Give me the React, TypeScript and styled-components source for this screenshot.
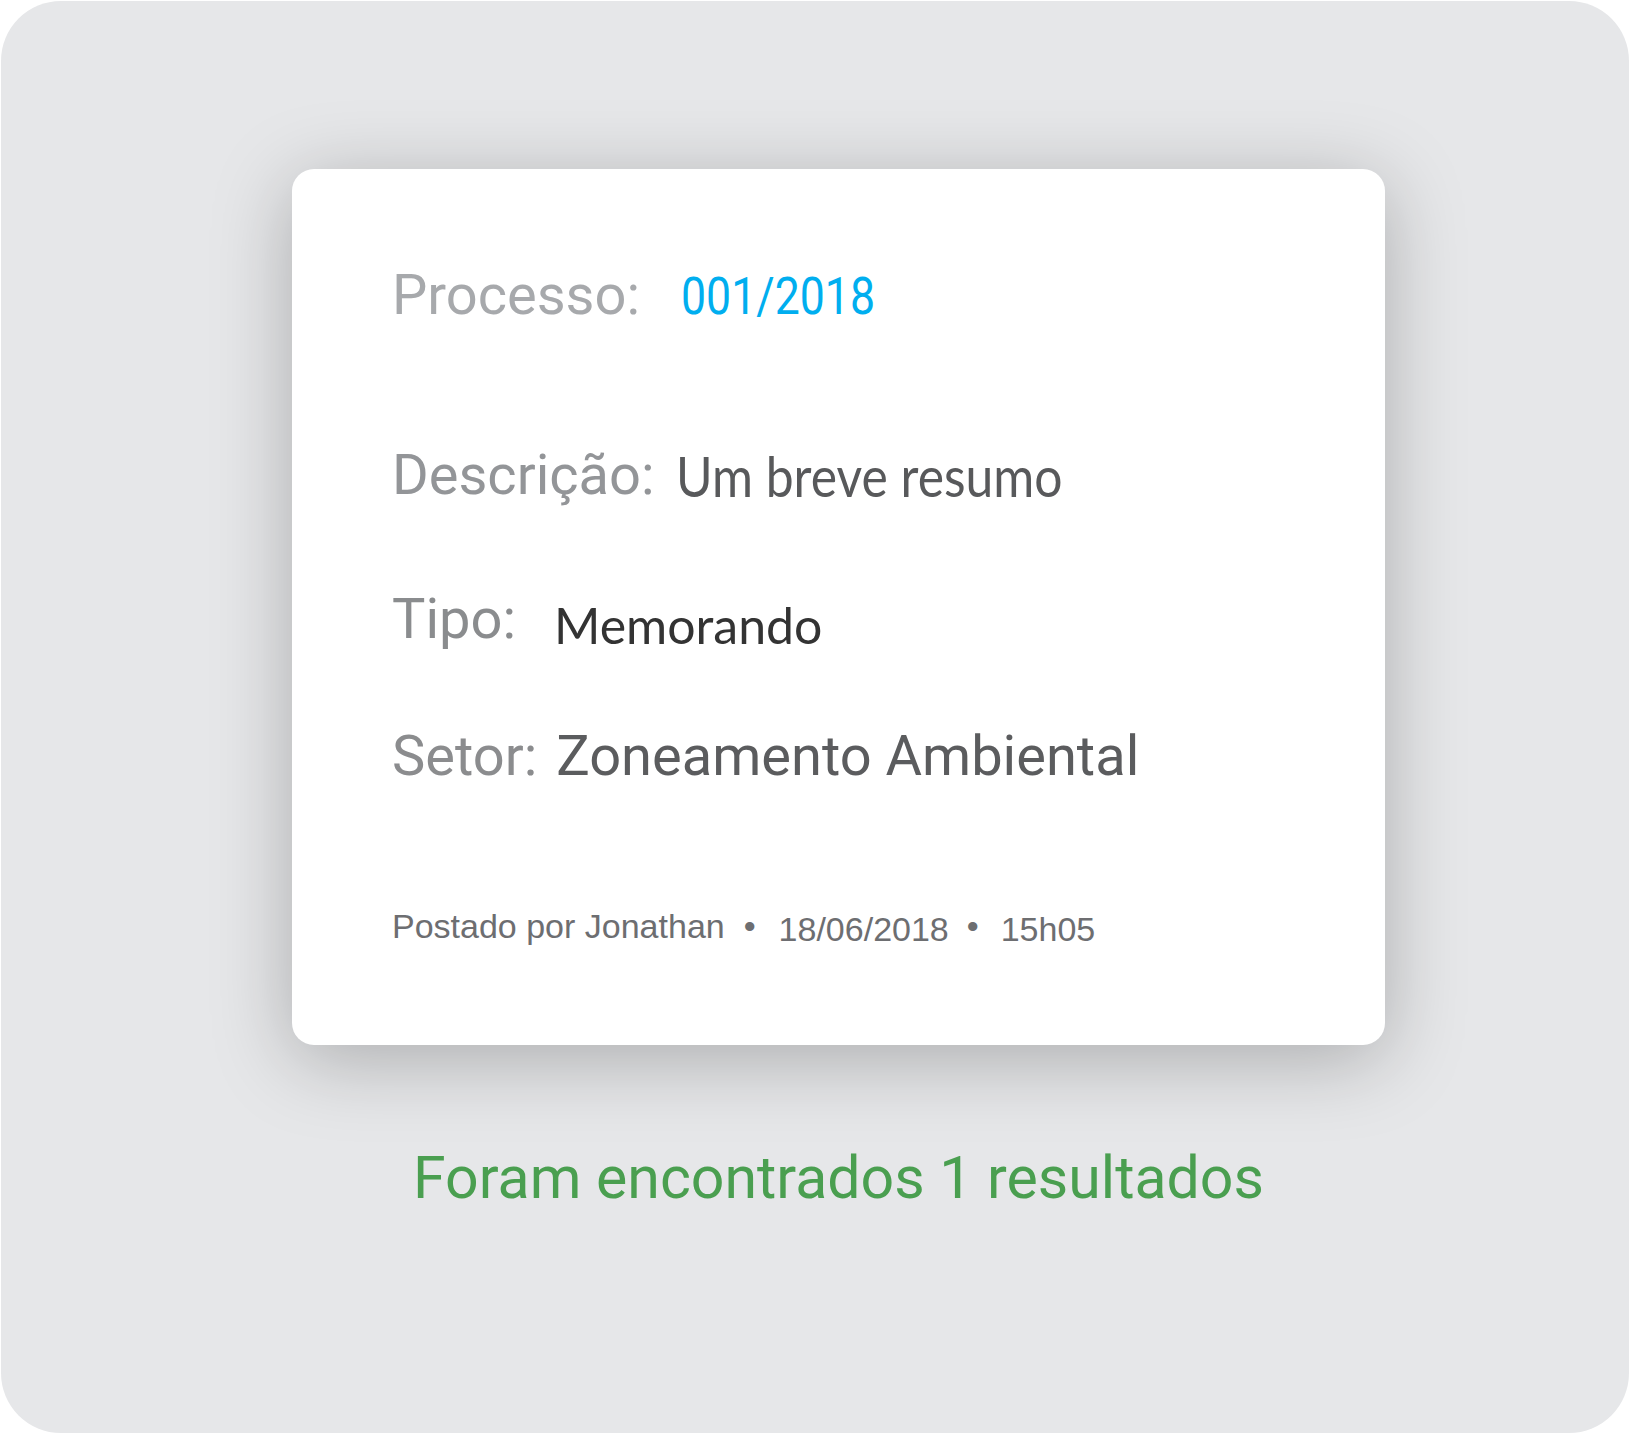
import React from "react";
import styled, { createGlobalStyle } from "styled-components";

const GlobalStyle = createGlobalStyle`
  html, body {
    margin: 0;
    padding: 0;
    background: #ffffff;
  }
  body {
    font-family: Roboto, "Liberation Sans", sans-serif;
  }
`;

type Field = {
  label: string;
  labelColor: string;
  value: string;
  valueFont: string;
  valueSize: number;
  valueColor: string;
  gap: number;
  drop?: number;
  squeeze?: number;
  top: number;
};

const fields: Field[] = [
  {
    label: "Processo:",
    labelColor: "#a7a9ac",
    value: "001/2018",
    valueFont: "Roboto, sans-serif",
    valueSize: 51,
    valueColor: "#00aeef",
    gap: 41,
    squeeze: 0.875,
    top: 0,
  },
  {
    label: "Descrição:",
    labelColor: "#939598",
    value: "Um breve resumo",
    valueFont: "Lato, sans-serif",
    valueSize: 56,
    valueColor: "#58595b",
    gap: 21,
    drop: 3,
    squeeze: 0.89,
    top: 124,
  },
  {
    label: "Tipo:",
    labelColor: "#8a8c8e",
    value: "Memorando",
    valueFont: "Lato, sans-serif",
    valueSize: 50,
    valueColor: "#333333",
    gap: 38,
    drop: 6,
    top: 88,
  },
  {
    label: "Setor:",
    labelColor: "#8b8c8e",
    value: "Zoneamento Ambiental",
    valueFont: "Roboto, sans-serif",
    valueSize: 56,
    valueColor: "#5b5c5e",
    gap: 19,
    top: 81,
  },
];

export default function App() {
  return (
    <>
      <GlobalStyle />
      <Frame>
        <Column>
          <Card>
            {fields.map((f) => (
              <FieldLine key={f.label} $top={f.top}>
                <Label $color={f.labelColor}>{f.label}</Label>
                <Value
                  $font={f.valueFont}
                  $size={f.valueSize}
                  $color={f.valueColor}
                  $gap={f.gap}
                  $drop={f.drop ?? 0}
                  $squeeze={f.squeeze ?? 1}
                >
                  {f.value}
                </Value>
              </FieldLine>
            ))}

            <Footer>
              <Meta>Postado por Jonathan</Meta>
              <Dot $before={19} $after={23}>•</Dot>
              <Meta $drop={3}>18/06/2018</Meta>
              <Dot $before={18} $after={22}>•</Dot>
              <Meta $drop={3}>15h05</Meta>
            </Footer>
          </Card>

          <Results>Foram encontrados 1 resultados</Results>
        </Column>
      </Frame>
    </>
  );
}

const Frame = styled.div`
  box-sizing: border-box;
  margin: 1px;
  width: 1628px;
  height: 1432px;
  background: #e6e7e9;
  border-radius: 60px;
  padding: 168px 0 0 291px;
  overflow: hidden;
`;

const Column = styled.div`
  width: 1093px;
  display: flex;
  flex-direction: column;
`;

const Card = styled.div`
  box-sizing: border-box;
  width: 1093px;
  height: 876px;
  background: #ffffff;
  border-radius: 22px;
  padding: 98px 100px 0 100px;
  box-shadow: 0 14px 80px rgba(0, 0, 0, 0.26);
`;

const FieldLine = styled.div<{ $top: number }>`
  height: 56px;
  margin-top: ${(p) => p.$top}px;
  font-family: Roboto, sans-serif;
  font-size: 56px;
  line-height: 1;
  white-space: nowrap;
`;

const Label = styled.span<{ $color: string }>`
  font-family: Roboto, sans-serif;
  font-size: 56px;
  color: ${(p) => p.$color};
  line-height: 1;
`;

const Value = styled.span<{
  $font: string;
  $size: number;
  $color: string;
  $gap: number;
  $drop: number;
  $squeeze: number;
}>`
  display: inline-block;
  margin-left: ${(p) => p.$gap}px;
  font-family: ${(p) => p.$font};
  font-size: ${(p) => p.$size}px;
  color: ${(p) => p.$color};
  line-height: 1;
  vertical-align: ${(p) => -p.$drop}px;
  transform: scaleX(${(p) => p.$squeeze});
  transform-origin: left center;
`;

const Footer = styled.div`
  margin-top: 125px;
  font-family: "Liberation Sans", Arial, sans-serif;
  font-size: 34px;
  line-height: 1;
  color: #6d6e71;
  white-space: nowrap;
`;

const Meta = styled.span<{ $drop?: number }>`
  display: inline-block;
  vertical-align: ${(p) => -(p.$drop ?? 0)}px;
`;

const Dot = styled.span<{ $before: number; $after: number }>`
  display: inline-block;
  margin: 0 ${(p) => p.$after}px 0 ${(p) => p.$before}px;
  color: #6d6e71;
`;

const Results = styled.div`
  margin-top: 103px;
  text-align: center;
  font-family: Roboto, sans-serif;
  font-size: 59px;
  line-height: 1;
  color: #4a9f50;
`;
